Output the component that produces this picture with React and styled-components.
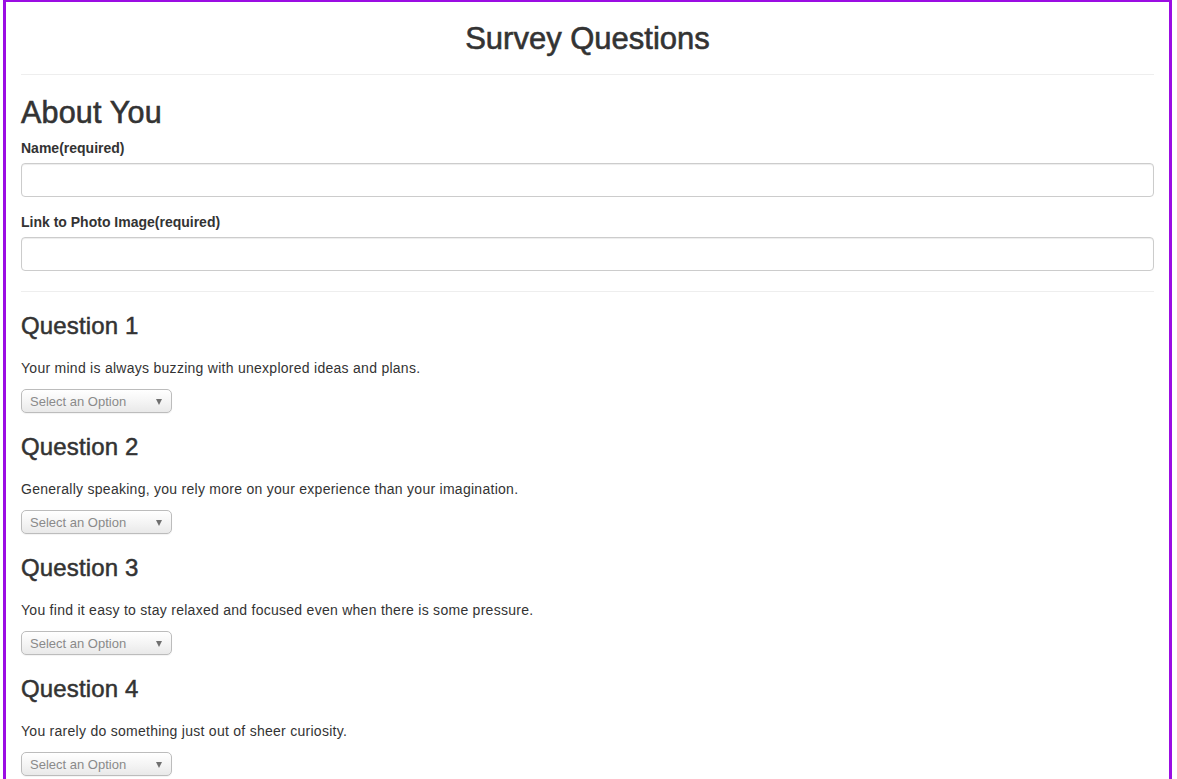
import React from "react";
import styled, { createGlobalStyle } from "styled-components";

const GlobalStyle = createGlobalStyle`
  html { scrollbar-width: none; }
  html::-webkit-scrollbar { display: none; }
  body {
    margin: 0;
    font-family: "Liberation Sans", Arial, Helvetica, sans-serif;
    font-size: 14px;
    line-height: 20px;
    color: #333;
    background: #fff;
  }
  * { box-sizing: border-box; }
`;

const Frame = styled.div`
  margin: 0 5px 0 3px;
  border: 3px solid #9b0de3;
  border-top-width: 2px;
  padding: 0 15px 40px;
`;

const Header = styled.header`
  padding: 20px 0 18px;
  border-bottom: 1px solid #eee;
  text-align: center;
`;

const Title = styled.h1`
  margin: 0;
  font-size: 31px;
  line-height: 34px;
  font-weight: 400;
  -webkit-text-stroke: 0.6px #333;
`;

const SectionTitle = styled.h2`
  margin: 21px 0 9px;
  font-size: 30.5px;
  line-height: 33px;
  font-weight: 400;
  letter-spacing: 0.2px;
  -webkit-text-stroke: 0.6px #333;
`;

const Fields = styled.div`
  display: flex;
  flex-direction: column;
  gap: 15px;
`;

const FormGroup = styled.div`
  display: flex;
  flex-direction: column;
  gap: 5px;
`;

const Label = styled.label`
  font-weight: 700;
  line-height: 20px;
`;

const TextInput = styled.input`
  display: block;
  width: 100%;
  height: 34px;
  padding: 6px 12px;
  font: inherit;
  color: #555;
  background: #fff;
  border: 1px solid #ccc;
  border-radius: 4px;
  box-shadow: inset 0 1px 1px rgba(0, 0, 0, 0.075);
  outline: none;
`;

const Divider = styled.hr`
  margin: 20px 0 0;
  border: 0;
  border-top: 1px solid #eee;
`;

const Question = styled.section`
  padding-top: 21px;
`;

const QuestionTitle = styled.h3`
  margin: 0 0 19px;
  font-size: 24px;
  line-height: 26px;
  font-weight: 400;
  letter-spacing: 0.15px;
  -webkit-text-stroke: 0.5px #333;
`;

const Prompt = styled.p`
  margin: 0 0 11px;
  line-height: 20px;
  letter-spacing: 0.27px;
`;

const SelectWrap = styled.div`
  position: relative;
  width: 151px;
  height: 24px;
`;

const Select = styled.select`
  appearance: none;
  -webkit-appearance: none;
  width: 100%;
  height: 100%;
  margin: 0;
  padding: 0 20px 0 8px;
  font-family: "Liberation Sans", Arial, sans-serif;
  font-size: 13px;
  color: #8a8a8a;
  background: linear-gradient(#ffffff, #f4f4f4 55%, #e9e9e9);
  border: 1px solid #bcbcbc;
  border-radius: 5px;
  box-shadow: 0 1px 1px rgba(0, 0, 0, 0.05);
  outline: none;
`;

const Arrow = styled.span`
  position: absolute;
  right: 10px;
  top: 10px;
  width: 0;
  height: 0;
  border-left: 3.5px solid transparent;
  border-right: 3.5px solid transparent;
  border-top: 6px solid #707070;
  pointer-events: none;
`;

const questions = [
  "Your mind is always buzzing with unexplored ideas and plans.",
  "Generally speaking, you rely more on your experience than your imagination.",
  "You find it easy to stay relaxed and focused even when there is some pressure.",
  "You rarely do something just out of sheer curiosity.",
];

const options = [
  "1 (Strongly Disagree)",
  "2",
  "3",
  "4",
  "5 (Strongly Agree)",
];

export default function App() {
  return (
    <>
      <GlobalStyle />
      <Frame>
        <Header>
          <Title>Survey Questions</Title>
        </Header>
        <SectionTitle>About You</SectionTitle>
        <Fields>
          <FormGroup>
            <Label htmlFor="name">Name(required)</Label>
            <TextInput id="name" type="text" />
          </FormGroup>
          <FormGroup>
            <Label htmlFor="photo">Link to Photo Image(required)</Label>
            <TextInput id="photo" type="text" />
          </FormGroup>
        </Fields>
        <Divider />
        {questions.map((q, i) => (
          <Question key={i}>
            <QuestionTitle>Question {i + 1}</QuestionTitle>
            <Prompt>{q}</Prompt>
            <SelectWrap>
              <Select defaultValue="">
                <option value="" disabled>
                  Select an Option
                </option>
                {options.map((o) => (
                  <option key={o} value={o}>
                    {o}
                  </option>
                ))}
              </Select>
              <Arrow />
            </SelectWrap>
          </Question>
        ))}
      </Frame>
    </>
  );
}
